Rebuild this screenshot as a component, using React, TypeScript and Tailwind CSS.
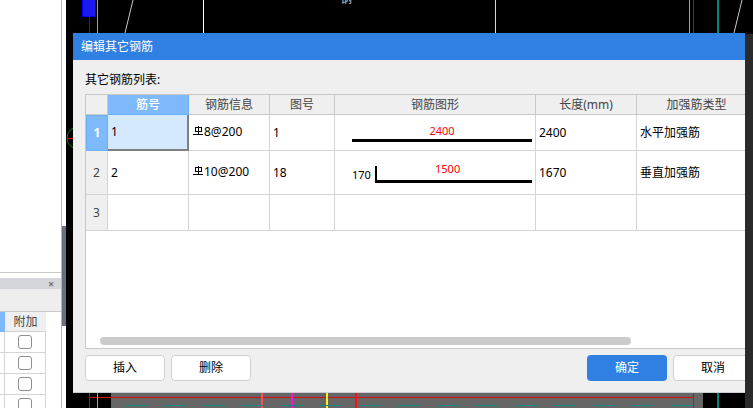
const font = { fontFamily: '"Noto Sans", "Noto Sans CJK SC", sans-serif' };

function CadCanvas() {
  return (
    <svg className="absolute inset-0" width="753" height="408" viewBox="0 0 753 408" shapeRendering="crispEdges">
      <rect x="82.5" y="-2" width="13" height="18" fill="#1a1aee" stroke="#0000ff" />
      <line x1="89.5" y1="0" x2="89.5" y2="408" stroke="#a00000" />
      <line x1="97.5" y1="0" x2="97.5" y2="408" stroke="#30d0d8" />
      <line x1="133" y1="0" x2="125" y2="33" stroke="#c8c8c8" shapeRendering="auto" />
      <line x1="203.5" y1="0" x2="203.5" y2="33" stroke="#ffffff" />
      <line x1="495.5" y1="0" x2="495.5" y2="33" stroke="#d8d8d8" />
      <line x1="689.5" y1="0" x2="689.5" y2="33" stroke="#30d0d8" />
      <line x1="693.5" y1="0" x2="693.5" y2="33" stroke="#b01010" />
      <line x1="717.5" y1="0" x2="717.5" y2="33" stroke="#008878" strokeWidth="2" />
      <line x1="742" y1="0" x2="734" y2="33" stroke="#c8c8c8" shapeRendering="auto" />
      <text x="340" y="3" fontSize="12" fill="#c0c0c0" shapeRendering="auto">钢</text>
      <circle cx="78" cy="138" r="11" fill="none" stroke="#0a7a0a" shapeRendering="auto" />
      <line x1="67" y1="138.5" x2="73" y2="138.5" stroke="#ff0000" />
      <rect x="111" y="392" width="592" height="16" fill="#666666" />
      <line x1="89" y1="397.5" x2="693" y2="397.5" stroke="#d01010" />
      <line x1="89.5" y1="392" x2="89.5" y2="408" stroke="#c01010" />
      <line x1="97.5" y1="392" x2="97.5" y2="408" stroke="#30d0d8" />
      <line x1="262" y1="392" x2="262" y2="408" stroke="#ff5050" strokeWidth="2" />
      <line x1="292" y1="392" x2="292" y2="408" stroke="#ff10e0" strokeWidth="2" />
      <line x1="327" y1="392" x2="327" y2="408" stroke="#ffee20" strokeWidth="2" />
      <line x1="356" y1="392" x2="356" y2="408" stroke="#ff1010" strokeWidth="2" />
      <line x1="693.5" y1="392" x2="693.5" y2="408" stroke="#d01010" />
      <line x1="717.5" y1="392" x2="717.5" y2="408" stroke="#008878" strokeWidth="2" />
      <line x1="125" y1="405.5" x2="700" y2="405.5" stroke="#0f8a80" strokeDasharray="22 17" />
    </svg>
  );
}

function RebarIcon() {
  return (
    <svg width="10" height="10" viewBox="0 0 10 10" className="shrink-0" shapeRendering="crispEdges">
      <path d="M2 1.5H8.5V5.5H2V1.5ZM5 0V8M0 8.5H10" fill="none" stroke="#000" />
    </svg>
  );
}

function SidePanel() {
  return (
    <div className="absolute left-0 top-0 h-full w-[66px] bg-white flex">
      <div className="w-[62px] h-full border-r border-[#b4b6ba] flex flex-col">
        <div className="h-[273px] shrink-0 border-b border-[#c8c8c8]" />
        <div className="h-[5px] shrink-0" />
        <div className="h-[11px] shrink-0 bg-[#d4d6db] flex items-center justify-end pr-[3px] text-[#777] text-[11px] font-bold leading-none">
          <span className="w-[10px]">×</span>
        </div>
        <div className="h-[22px] shrink-0 bg-[#eeeeee]" />
        <div className="flex h-[21px] shrink-0 border-t border-[#c8c8c8] bg-white">
          <div className="w-[5px] bg-[#7eb9fb]" />
          <div className="w-[41px] bg-[#efefef] border-b border-[#d0d0d0] text-[12px] text-[#444] text-center leading-[20px]">附加</div>
        </div>
        {[0, 1, 2, 3].map((i) => (
          <div key={i} className="flex h-[21px] shrink-0">
            <div className="w-[5px] border-r border-b border-[#d4d4d4]" />
            <div className="w-[41px] border-r border-b border-[#d4d4d4] flex items-center justify-center">
              <div className="w-[14px] h-[14px] rounded-[3px] border border-[#8f8f8f] bg-white" />
            </div>
          </div>
        ))}
      </div>
      <div className="w-[4px] h-[100px] mt-[226px] bg-[#68707a]" />
    </div>
  );
}

const colTemplate = 'grid grid-cols-[22px_81px_81px_65px_201px_101px_120px]';

function Head({ children, active }: { children?: React.ReactNode; active?: boolean }) {
  return (
    <div
      className={`flex items-center justify-center border-r border-b text-[12px] ${
        active ? 'bg-[#7eb9fb] border-[#6db0f8] text-white font-medium' : 'bg-[#efefef] border-[#c8c8c8] text-[#444]'
      }`}
    >
      {children}
    </div>
  );
}

function Cell({ children, selected }: { children?: React.ReactNode; selected?: boolean }) {
  return (
    <div
      className={`flex items-center pl-[3px] text-[12px] text-black ${
        selected ? 'bg-[#d4e9fe] border-r-2 border-b-2 border-[#808080]' : 'border-r border-b border-[#d4d4d4]'
      }`}
    >
      {children}
    </div>
  );
}

function RowHead({ children, active }: { children: React.ReactNode; active?: boolean }) {
  return (
    <div
      className={`flex items-center justify-center text-[12px] ${
        active ? 'bg-[#7eb9fb] border border-[#6db0f8] text-white font-bold' : 'bg-[#efefef] border-r border-b border-[#d4d4d4] text-[#444]'
      }`}
    >
      {children}
    </div>
  );
}

function RebarInfo({ text }: { text: string }) {
  return (
    <div className="flex items-start gap-[1px] -mt-[1px] pl-[1px]">
      <span className="mt-[1px]">
        <RebarIcon />
      </span>
      <span className="leading-[14px]">{text}</span>
    </div>
  );
}

function Shape1() {
  return (
    <div className="w-full h-full flex flex-col items-start pl-[14px] pt-[9px]">
      <div className="w-[180px] text-center text-[11px] leading-[13px] text-[#ff0000]">2400</div>
      <div className="w-[180px] h-[3px] bg-black mt-[2px]" />
    </div>
  );
}

function Shape2() {
  return (
    <div className="w-full flex items-end pl-[14px] pb-[11px] h-full">
      <span className="w-[23px] text-[11px] leading-[14px] pb-[1px]">170</span>
      <div className="w-[157px] h-[17px] border-l-2 border-b-[3px] border-black relative">
        <span className="absolute left-[58px] -top-[4px] text-[11px] leading-[13px] text-[#ff0000]">1500</span>
      </div>
    </div>
  );
}

function EditDialog() {
  return (
    <div className="absolute left-[73px] top-[33px] w-[672px] h-[360px] bg-[#efefef] border-b border-[#c9ccd3] overflow-hidden flex flex-col">
      <div className="h-[27px] bg-[#2f80e2] text-white text-[12px] flex items-center pl-[8px] shrink-0">编辑其它钢筋</div>
      <div className="h-[34px] flex items-end pl-[12px] pb-[5px] text-[12px] text-black shrink-0">其它钢筋列表:</div>
      <div className="ml-[12px] h-[255px] w-[680px] shrink-0 bg-white border border-[#c8c8c8] relative overflow-hidden">
        <div className={`${colTemplate} grid-rows-[20px_36px_44px_36px]`}>
          <Head />
          <Head active>筋号</Head>
          <Head>钢筋信息</Head>
          <Head>图号</Head>
          <Head>钢筋图形</Head>
          <Head>长度(mm)</Head>
          <Head>加强筋类型</Head>

          <RowHead active>1</RowHead>
          <Cell selected>1</Cell>
          <Cell><RebarInfo text="8@200" /></Cell>
          <Cell>1</Cell>
          <Cell><Shape1 /></Cell>
          <Cell>2400</Cell>
          <Cell>水平加强筋</Cell>

          <RowHead>2</RowHead>
          <Cell>2</Cell>
          <Cell><RebarInfo text="10@200" /></Cell>
          <Cell>18</Cell>
          <Cell><Shape2 /></Cell>
          <Cell>1670</Cell>
          <Cell>垂直加强筋</Cell>

          <RowHead>3</RowHead>
          <Cell />
          <Cell />
          <Cell />
          <Cell />
          <Cell />
          <Cell />
        </div>
        <div className="absolute left-[14px] top-[242px] w-[531px] h-[8px] rounded-[4px] bg-[#cbcbcb]" />
      </div>
      <div className="flex mt-[6px] ml-[12px] gap-[6px] w-[668px] shrink-0">
        <button className="w-[80px] h-[26px] bg-white border border-[#d0d0d0] rounded-[4px] text-[12px] text-black">插入</button>
        <button className="w-[80px] h-[26px] bg-white border border-[#d0d0d0] rounded-[4px] text-[12px] text-black">删除</button>
        <button className="ml-auto w-[80px] h-[26px] bg-[#2f80e2] rounded-[4px] text-[12px] text-white">确定</button>
        <button className="w-[80px] h-[26px] bg-white border border-[#d0d0d0] rounded-[4px] text-[12px] text-black">取消</button>
      </div>
    </div>
  );
}

export default function App() {
  return (
    <div className="relative w-[753px] h-[408px] bg-black overflow-hidden" style={font}>
      <CadCanvas />
      <SidePanel />
      <EditDialog />
      <div className="absolute left-[745px] top-[34px] w-[8px] h-[374px] bg-[#2a2a2a]" />
    </div>
  );
}
